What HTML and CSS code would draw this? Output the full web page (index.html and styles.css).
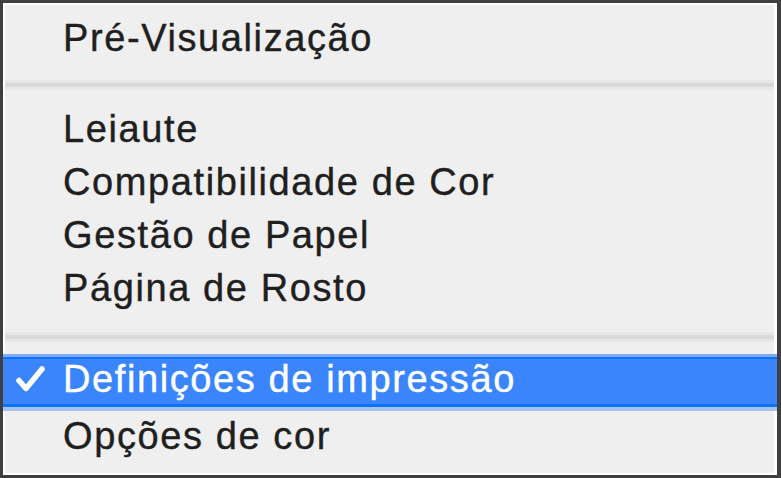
FILE: index.html
```html
<!DOCTYPE html>
<html lang="pt">
<head>
<meta charset="utf-8">
<title>Menu</title>
<link rel="stylesheet" href="styles.css">
</head>
<body>
<div class="frame">
  <div class="menu">
    <div class="item first"><span class="mark"></span><span class="label">Pré-Visualização</span></div>
    <div class="sep sep1"></div>
    <div class="group">
      <div class="item"><span class="mark"></span><span class="label">Leiaute</span></div>
      <div class="item"><span class="mark"></span><span class="label">Compatibilidade de Cor</span></div>
      <div class="item"><span class="mark"></span><span class="label">Gestão de Papel</span></div>
      <div class="item"><span class="mark"></span><span class="label">Página de Rosto</span></div>
    </div>
    <div class="sep sep2"></div>
    <div class="item selected">
      <span class="mark">
        <svg class="check" width="30" height="26" viewBox="0 0 30 26" aria-hidden="true">
          <path d="M4 14.5 L11 22.5 L27 3" fill="none" stroke="#ffffff" stroke-width="5.5" stroke-linecap="round" stroke-linejoin="round"/>
        </svg>
      </span>
      <span class="label">Definições de impressão</span>
    </div>
    <div class="item last"><span class="mark"></span><span class="label">Opções de cor</span></div>
  </div>
</div>
</body>
</html>
```
FILE: styles.css
```css
html, body {
  margin: 0;
  padding: 0;
}
body {
  width: 781px;
  height: 478px;
  background: #3f3f3f;
  overflow: hidden;
}
.frame {
  box-sizing: border-box;
  width: 781px;
  height: 478px;
  padding: 3px 4px 3px 3px;
  display: flex;
}
.menu {
  flex: 1;
  display: flex;
  flex-direction: column;
  background: #efefef;
  border-style: solid;
  border-color: #ffffff;
  border-width: 2px 3px 2px 2px;
  font-family: "Liberation Sans", Arial, sans-serif;
  font-size: 38px;
  letter-spacing: 1.6px;
  color: #1f1f1f;
  -webkit-text-stroke: 0.4px currentColor;
}
.item {
  display: flex;
  align-items: flex-start;
  height: 53px;
  line-height: 53px;
  white-space: nowrap;
}
.mark {
  flex: 0 0 58px;
  width: 58px;
}
.first {
  margin-top: 7px;
}
.sep {
  height: 10px;
  flex: 0 0 10px;
  background: linear-gradient(to bottom, #e7e7e7 0, #e7e7e7 3px, #d9d9d9 3px, #d9d9d9 7px, #e7e7e7 7px, #e7e7e7 10px);
}
.sep1 {
  margin-top: 15px;
}
.group {
  margin-top: 13px;
  display: flex;
  flex-direction: column;
}
.sep2 {
  margin-top: 17px;
}
.selected {
  margin: 12px -3px 0 -2px;
  padding-left: 2px;
  height: 57px;
  line-height: 50px;
  color: #ffffff;
  background: linear-gradient(to bottom,
    #7eabf2 0, #7eabf2 3px,
    #0b72fa 3px, #0b72fa 5px,
    #3a85fb 5px, #3a85fb 50px,
    #0b72fa 50px, #0b72fa 53px,
    #a6c3ee 53px, #a6c3ee 57px);
}
.check {
  display: block;
  margin: 12px 0 0 10px;
}
.last {
  line-height: 50px;
}
```
